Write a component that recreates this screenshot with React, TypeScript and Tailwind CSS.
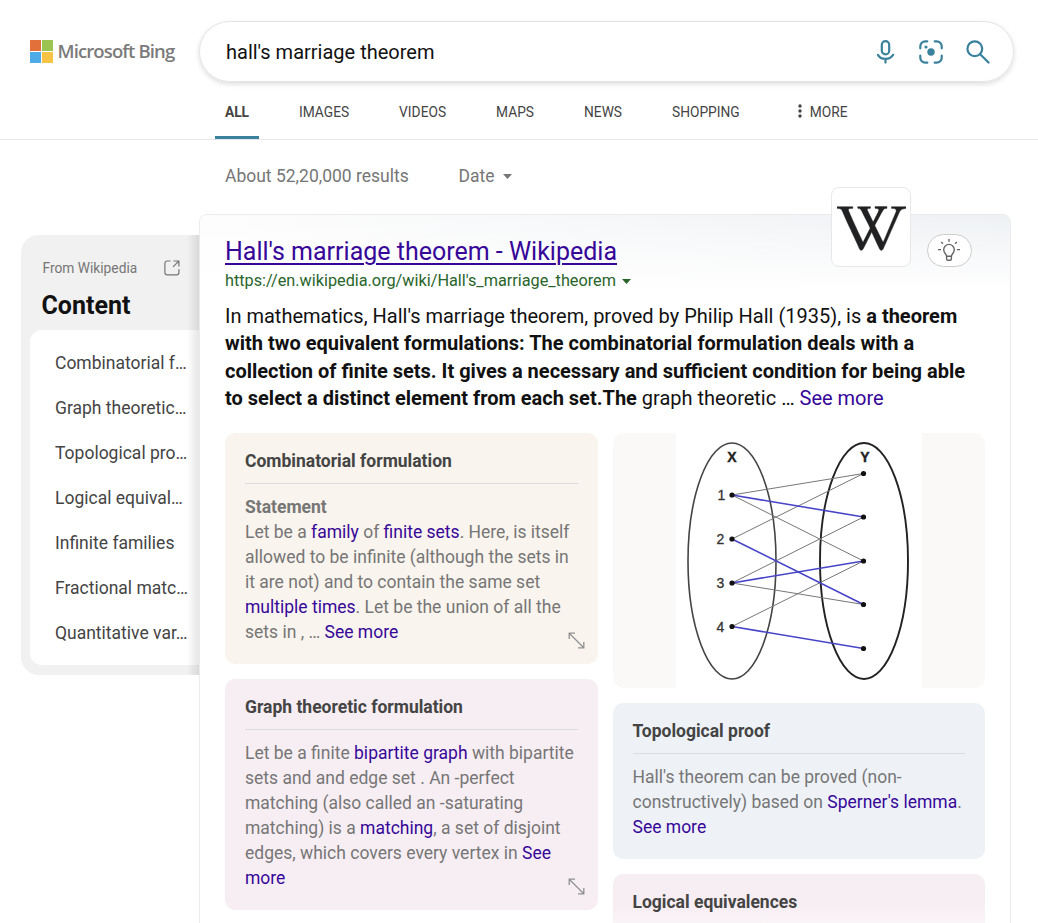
import React from "react";
import { SiWikipedia } from "react-icons/si";

const contents = [
  "Combinatorial f…",
  "Graph theoretic…",
  "Topological pro…",
  "Logical equival…",
  "Infinite families",
  "Fractional matc…",
  "Quantitative var…",
];

const tabs = ["IMAGES", "VIDEOS", "MAPS", "NEWS", "SHOPPING"];

function A({ children }: { children: React.ReactNode }) {
  return <a className="text-[#360799]">{children}</a>;
}

function Expand() {
  return (
    <svg className="absolute right-[13px] bottom-[15.5px]" width="17" height="17" viewBox="0 0 17 17" fill="none" stroke="#919191" strokeWidth="1.3">
      <path d="M1.2 7V1.2H7M1.2 1.2L15.8 15.8M10 15.8h5.8V10" />
    </svg>
  );
}

function CardTitle({ children }: { children: React.ReactNode }) {
  return (
    <h3 className="h-[51px] border-b border-[#dadce0] pt-[16px] text-[17.5px] leading-[25px] font-bold text-[#444]">{children}</h3>
  );
}

function Mic() {
  return (
    <svg width="18" height="24" viewBox="0 0 18 24" fill="none" stroke="#39819c" strokeWidth="2.2" strokeLinecap="round">
      <rect x="4.8" y="1.2" width="7.4" height="13.2" rx="3.7" />
      <path d="M.9 14.8c1.6 2.9 4.4 4.1 7.6 4.1s6-1.2 7.6-4.1M8.5 19v3.6" />
    </svg>
  );
}

function Lens() {
  return (
    <svg width="24" height="24" viewBox="0 0 24 24" fill="none" stroke="#39819c" strokeWidth="2.2" strokeLinecap="round">
      <path d="M1.3 8.3V6.3a5 5 0 0 1 5-5H8.3M15.7 1.3h2a5 5 0 0 1 5 5V8.3M22.7 15.7v2a5 5 0 0 1-5 5H15.7M8.3 22.7H6.3a5 5 0 0 1-5-5V15.7" />
      <circle cx="12" cy="12" r="3.7" fill="#39819c" stroke="none" />
      <circle cx="7" cy="7" r="1.6" fill="#39819c" stroke="none" />
    </svg>
  );
}

function Search() {
  return (
    <svg width="24" height="24" viewBox="0 0 24 24" fill="none" stroke="#39819c" strokeWidth="2.2" strokeLinecap="round">
      <circle cx="8.8" cy="8.8" r="7.4" />
      <path d="M14.2 14.2l8.3 8.3" />
    </svg>
  );
}

function Bulb() {
  return (
    <svg className="-mt-px" width="24" height="24" viewBox="0 0 24 24" fill="none" stroke="#666" strokeWidth="1.4">
      <path d="M9.6 18.2c0-2.2-2.9-3.1-2.9-6.5a5.3 5.3 0 0 1 10.6 0c0 3.4-2.9 4.3-2.9 6.5zM9.6 18.2v2.9c0 .8.4 1.2 1.2 1.2h2.4c.8 0 1.2-.4 1.2-1.2v-2.9" />
      <path d="M12 1v2.8M4.2 4.1l1.7 1.7M19.8 4.1l-1.7 1.7M1 11.6h3M20 11.6h3" />
    </svg>
  );
}

const leftY = [62, 106, 150, 193.5];
const rightY = [40.5, 84, 128, 171.5, 215.5];
const thinEdges = [[0, 0], [0, 2], [1, 0], [2, 1], [2, 3], [3, 2]];
const matchedEdges = [[0, 1], [1, 3], [2, 2], [3, 4]];

function Graph() {
  return (
    <svg className="bg-white" width="246" height="255" viewBox="0 0 246 255" fill="none">
      <g stroke="#444" strokeWidth="1.6">
        <ellipse cx="56" cy="128" rx="44" ry="118" />
        <ellipse cx="188" cy="128" rx="44" ry="118" stroke="#222" strokeWidth="1.9" />
      </g>
      <g stroke="#777" strokeWidth="1">
        {thinEdges.map(([a, b]) => (
          <path key={`${a}${b}`} d={`M56 ${leftY[a]}L187.5 ${rightY[b]}`} />
        ))}
      </g>
      <g stroke="#4744c8" strokeWidth="1.6">
        {matchedEdges.map(([a, b]) => (
          <path key={`${a}${b}`} d={`M56 ${leftY[a]}L187.5 ${rightY[b]}`} />
        ))}
      </g>
      <g fill="#111">
        {leftY.map((y) => <circle key={y} cx="56" cy={y} r="2.6" />)}
        {rightY.map((y) => <circle key={y} cx="187.5" cy={y} r="2.6" />)}
      </g>
      <g className="font-['Liberation_Sans',sans-serif]" fill="#222" fontSize="14" textAnchor="middle">
        <text x="56" y="29" fontWeight="bold" stroke="#222" strokeWidth="0.4">X</text>
        <text x="189" y="29" fontWeight="bold" stroke="#222" strokeWidth="0.4">Y</text>
        {leftY.map((y, i) => <text key={y} x={i === 0 ? 45.5 : 44.5} y={y + 5} fill="#333" stroke="#333" strokeWidth="0.3">{i + 1}</text>)}
      </g>
    </svg>
  );
}

export default function App() {
  return (
    <div className="h-[923px] w-[1038px] overflow-hidden bg-white font-[Roboto,sans-serif] whitespace-nowrap text-[#111]">
      <header className="h-[140px] border-b border-[#e8e8e8]">
        <div className="flex pt-[21px]">
          <div className="flex w-[199px] shrink-0 pt-[19px] pl-[30px]">
            <div className="grid h-[23px] w-[23px] grid-cols-2 gap-px">
              <span className="bg-[#e2703a]" />
              <span className="bg-[#9bc453]" />
              <span className="bg-[#4fabe8]" />
              <span className="bg-[#f6c344]" />
            </div>
            <span className="ml-[4.5px] -mt-[1px] font-['Open_Sans',sans-serif] text-[18.5px] leading-[24px] font-semibold tracking-[-0.88px] text-[#7b7b7b]">Microsoft Bing</span>
          </div>
          <div className="flex h-[61px] w-[815px] items-center rounded-full border border-[#e4e4e4] pr-[23px] pl-[26px] shadow-[0_2px_5px_rgba(0,0,0,0.14)]">
            <span className="flex-1 text-[20px]">hall's marriage theorem</span>
            <Mic />
            <span className="ml-[24px]"><Lens /></span>
            <span className="ml-[23px]"><Search /></span>
          </div>
        </div>
        <nav className="flex pt-[15px] pl-[215px] text-[13.75px] leading-[30px] text-[#444]">
          <span className="mr-[40px] flex h-[42px] w-[44px] justify-center border-b-[3px] border-[#39819c] font-bold">ALL</span>
          <div className="flex gap-[50px]">
            {tabs.map((t) => <span key={t}>{t}</span>)}
          </div>
          <span className="ml-[58px] flex gap-[8px]">
            <svg className="mt-[7px]" width="4" height="14" viewBox="0 0 4 14" fill="#444">
              <circle cx="2" cy="2" r="1.7" />
              <circle cx="2" cy="7" r="1.7" />
              <circle cx="2" cy="12" r="1.7" />
            </svg>
            MORE
          </span>
        </nav>
      </header>

      <div className="flex h-[74px] pt-[23px] pl-[225px] text-[17.5px] leading-[26px] text-[#767676]">
        <span className="w-[233.5px]">About 52,20,000 results</span>
        <span>Date</span>
        <svg className="mt-[11px] ml-[8px]" width="9" height="5" viewBox="0 0 9 5" fill="#767676"><path d="M0 0h9L4.5 5z" /></svg>
      </div>

      <main className="flex">
        <aside className="relative mt-[21px] ml-[20.5px] h-[440px] w-[178.5px] shrink-0 rounded-l-[18px] bg-[#f1f1f1] pl-[9.5px]">
          <div className="flex items-center justify-between pt-[23px] pr-[19px] pl-[12.5px] text-[13.75px] leading-[20px] text-[#767676]">
            From Wikipedia
            <svg width="16" height="16" viewBox="0 0 16 16" fill="none" stroke="#767676" strokeWidth="1.2">
              <path d="M6.5 1H3.2A2.3 2.3 0 0 0 .9 3.3v9.2a2.3 2.3 0 0 0 2.3 2.3h9.4a2.3 2.3 0 0 0 2.3-2.3V9.2M9.4 1h5.5v5.5M14.9 1L9 6.9" />
            </svg>
          </div>
          <h2 className="mt-[13px] pl-[11.5px] text-[25px] leading-[30px] font-bold">Content</h2>
          <ul className="mt-[9px] h-[335px] rounded-l-[12px] bg-white pt-[11px] pl-[25px] text-[17.5px] leading-[45px] text-[#444]">
            {contents.map((c) => <li key={c}>{c}</li>)}
          </ul>
          <div className="absolute inset-y-0 right-0 w-[12px] bg-linear-to-r from-black/0 to-black/10" />
        </aside>

        <section className="relative h-[740px] w-[812px] rounded-t-[8px] border border-[#ebebeb] px-[25px] pt-[21px]">
          <div className="absolute inset-x-0 top-0 h-[76px] rounded-t-[7px] bg-[linear-gradient(to_bottom,transparent,white),linear-gradient(to_right,#fdfdfd,#eef1f4)]" />
          <div className="absolute top-[-28px] left-[631px] flex h-[80px] w-[80px] items-center justify-center rounded-[8px] border border-[#e8e8e8] bg-white pt-[3px]">
            <SiWikipedia size={69} color="#202122" stroke="#202122" strokeWidth={0.15} />
          </div>
          <div className="absolute top-[19px] left-[726.5px] flex h-[33px] w-[45px] items-center justify-center rounded-full border-[1.5px] border-[#ccc] bg-white"><Bulb /></div>

          <div className="relative">
            <h1 className="text-[25px] leading-[32px] text-[#360799] underline decoration-2 underline-offset-[3px]">Hall's marriage theorem - Wikipedia</h1>
            <div className="mt-px flex text-[16.25px] leading-[24px] text-[#28652a]">
              https://en.wikipedia.org/wiki/Hall's_marriage_theorem
              <svg className="mt-[10px] ml-[6px]" width="9" height="5" viewBox="0 0 9 5" fill="#28652a"><path d="M0 0h9L4.5 5z" /></svg>
            </div>
            <p className="mt-[9.5px] text-[20px] leading-[27.5px]">
              In mathematics, Hall's marriage theorem, proved by Philip Hall (1935), is <b>a theorem<br />
              with two equivalent formulations: The combinatorial formulation deals with a<br />
              collection of finite sets. It gives a necessary and sufficient condition for being able<br />
              to select a distinct element from each set.The</b> graph theoretic … <A>See more</A>
            </p>
          </div>

          <div className="mt-[20.5px] grid grid-cols-[373px_372px] items-start gap-x-[15px] text-[17.5px] leading-[25px] text-[#767676]">
            <div className="flex flex-col gap-[15px]">
              <article className="relative h-[231px] rounded-[10px] bg-[#f9f4ed] px-[20px]">
                <CardTitle>Combinatorial formulation</CardTitle>
                <h4 className="mt-[11px] font-bold">Statement</h4>
                <p>
                  Let be a <A>family</A> of <A>finite sets</A>. Here, is itself<br />
                  allowed to be infinite (although the sets in<br />
                  it are not) and to contain the same set<br />
                  <A>multiple times</A>. Let be the union of all the<br />
                  sets in , … <A>See more</A>
                </p>
                <Expand />
              </article>
              <article className="relative h-[231px] rounded-[10px] bg-[#f7eef3] px-[20px]">
                <CardTitle>Graph theoretic formulation</CardTitle>
                <p className="mt-[11px]">
                  Let be a finite <A>bipartite graph</A> with bipartite<br />
                  sets and and edge set . An -perfect<br />
                  matching (also called an -saturating<br />
                  matching) is a <A>matching</A>, a set of disjoint<br />
                  edges, which covers every vertex in <A>See<br />more</A>
                </p>
                <Expand />
              </article>
            </div>
            <div className="flex flex-col gap-[15px]">
              <figure className="flex h-[255px] justify-center rounded-[10px] bg-[#faf9f8]"><Graph /></figure>
              <article className="h-[156px] rounded-[10px] bg-[#eef2f7] pr-[20px] pl-[19.5px]">
                <CardTitle>Topological proof</CardTitle>
                <p className="mt-[11px]">
                  Hall's theorem can be proved (non-<br />
                  constructively) based on <A>Sperner's lemma</A>.<br />
                  <A>See more</A>
                </p>
              </article>
              <article className="h-[80px] rounded-t-[10px] bg-linear-to-b from-[#f7eef3] from-40% to-white pr-[20px] pl-[19.5px]">
                <CardTitle>Logical equivalences</CardTitle>
              </article>
            </div>
          </div>
        </section>
      </main>
    </div>
  );
}
